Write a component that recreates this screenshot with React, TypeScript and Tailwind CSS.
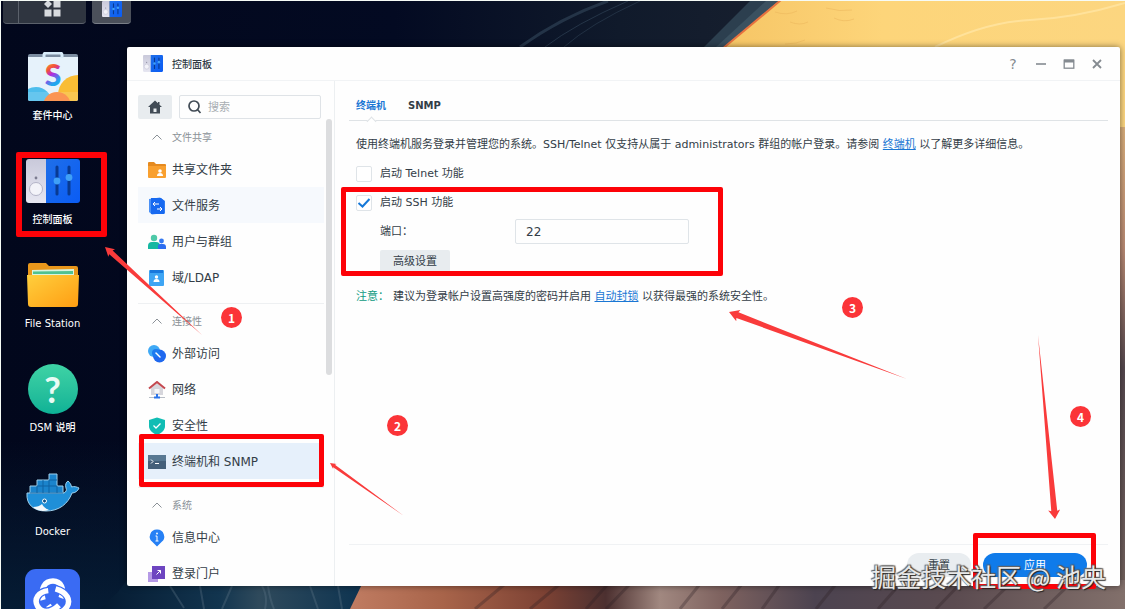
import { ReactNode, useState } from 'react';
import clsx from 'clsx';

type Point = [number, number];

interface MenuItem {
  label: string;
  icon: ReactNode;
  state?: 'hover' | 'active';
}

interface MenuSection {
  title: string;
  items: MenuItem[];
}

/* ---------- wallpaper ---------- */

function Wallpaper() {
  return (
    <svg
      className="absolute inset-0 h-full w-full"
      viewBox="0 0 1125 609"
      preserveAspectRatio="none"
      aria-hidden="true"
    >
      <defs>
        <linearGradient id="night" x1="0" y1="0" x2="1" y2="0">
          <stop offset="0" stopColor="#02071c" />
          <stop offset="0.35" stopColor="#030a22" />
          <stop offset="0.55" stopColor="#101a2b" />
          <stop offset="0.7" stopColor="#18202f" />
        </linearGradient>
        <linearGradient id="dusk" x1="0" y1="0" x2="0" y2="1">
          <stop offset="0" stopColor="#06213a" stopOpacity="0" />
          <stop offset="1" stopColor="#06213a" stopOpacity="0.8" />
        </linearGradient>
        <linearGradient id="sand" x1="0" y1="0" x2="1" y2="0">
          <stop offset="0" stopColor="#f6c565" />
          <stop offset="0.4" stopColor="#fdd57a" />
          <stop offset="1" stopColor="#fcd680" />
        </linearGradient>
        <linearGradient id="rock" x1="0" y1="0" x2="1" y2="0">
          <stop offset="0" stopColor="#c07c62" />
          <stop offset="0.12" stopColor="#a8644a" />
          <stop offset="0.25" stopColor="#7d4234" />
          <stop offset="0.33" stopColor="#4c3030" />
          <stop offset="0.4" stopColor="#a18880" />
          <stop offset="0.48" stopColor="#7e625f" />
          <stop offset="0.6" stopColor="#4c4350" />
          <stop offset="0.78" stopColor="#5b4b50" />
          <stop offset="1" stopColor="#82706b" />
        </linearGradient>
        <linearGradient id="edge" x1="0" y1="0" x2="0" y2="1">
          <stop offset="0" stopColor="#d9ae7b" />
          <stop offset="0.25" stopColor="#b98a74" />
          <stop offset="0.5" stopColor="#55484e" />
          <stop offset="1" stopColor="#75645f" />
        </linearGradient>
        <linearGradient id="sea" x1="0" y1="0" x2="1" y2="0">
          <stop offset="0" stopColor="#051a31" />
          <stop offset="0.45" stopColor="#12354f" />
          <stop offset="0.6" stopColor="#2f4a5c" />
          <stop offset="1" stopColor="#0d3350" />
        </linearGradient>
      </defs>
      <rect width="1125" height="609" fill="url(#night)" />
      <rect y="440" width="127" height="169" fill="url(#dusk)" />
      <g stroke="#33475b" fill="none">
        <path d="M520 47Q560 18 608 1" strokeWidth="3" opacity="0.6" />
        <path d="M545 47Q575 24 628 1" opacity="0.6" />
        <path d="M564 47Q590 24 640 1" opacity="0.5" />
      </g>
      <path d="M704 47L750 1H782L726 47z" fill="#2c3f4f" />
      <path d="M716 47L766 1H782L726 47z" fill="#3b5160" />
      <path d="M721 50L780 0H1125V609H1110V50z" fill="url(#sand)" />
      <path d="M721 50L781 0" stroke="#e7713f" strokeWidth="2" />
      <g stroke="#e9b45a" fill="none" opacity="0.5">
        <path d="M775 12q12 4 22 -1M790 22q10 4 18 0M826 8q14 4 26 2M834 18q10 5 20 1M785 44q12 0 20 -4" />
      </g>
      <path d="M935 47Q985 22 1030 20T1125 3" stroke="#ffe29b" strokeWidth="2" fill="none" />
      <rect x="1115" y="127" width="10" height="482" fill="url(#edge)" />
      <path d="M127 580H365L352 609H100L118 592z" fill="url(#sea)" />
      <g stroke="#5f7686" fill="none" opacity="0.35" strokeWidth="2">
        <path d="M262 586q6 10 3 23M268 586q2 14 6 23M232 586l-10 23M170 586l14 22M310 586l8 23M338 586l4 23M200 586l4 23" />
      </g>
      <path d="M350 609L364 580H1125V609z" fill="url(#rock)" />
      <g stroke="#2a1d22" opacity="0.3" strokeWidth="3">
        <path d="M505 584l-30 25M560 584l-30 25M608 584l-22 25M630 584l-24 25M700 584l-20 25M742 584l-20 25M780 584l-18 25M836 584l-20 25M900 584l-22 25M960 584l-24 25M1010 584l-26 25M1070 584l-26 25" />
      </g>
      <path d="M0 0H1125V1H0z" fill="#f6fbf6" />
      <path d="M0 0H1V609H0z" fill="#f6fbf6" />
    </svg>
  );
}

/* ---------- desktop icons ---------- */

function ControlPanelIcon({ className }: { className: string }) {
  return (
    <svg className={className} viewBox="0 0 54 44" preserveAspectRatio="none" aria-hidden="true">
      <defs>
        <linearGradient id="cpBlue" x1="0" y1="0" x2="1" y2="1">
          <stop offset="0" stopColor="#1f6fe8" />
          <stop offset="1" stopColor="#0a5cf5" />
        </linearGradient>
        <linearGradient id="cpGray" x1="0" y1="0" x2="0" y2="1">
          <stop offset="0" stopColor="#c9c9da" />
          <stop offset="1" stopColor="#e6e6f1" />
        </linearGradient>
      </defs>
      <path d="M20 0H51a3 3 0 0 1 3 3V41a3 3 0 0 1 -3 3H20z" fill="url(#cpBlue)" />
      <path d="M3 0H20V44H3a3 3 0 0 1 -3 -3V3a3 3 0 0 1 3 -3z" fill="url(#cpGray)" />
      <circle cx="10" cy="19" r="1.4" fill="#7c7c90" />
      <circle cx="10" cy="30" r="6.5" fill="#f3f3f9" stroke="#b4b4c8" />
      <path d="M31 8V35M43 8V35" stroke="#083a92" strokeWidth="3" strokeLinecap="round" />
      <circle cx="31" cy="22" r="3.4" fill="#3fa0f7" />
      <circle cx="43" cy="18.500" r="3.4" fill="#3fa0f7" />
    </svg>
  );
}

function PackageIcon() {
  return (
    <svg className="h-[50px] w-[50px]" viewBox="0 0 50 50" aria-hidden="true">
      <defs>
        <linearGradient id="pkgS" x1="0" y1="0" x2="0.3" y2="1">
          <stop offset="0.2" stopColor="#fb9e2c" />
          <stop offset="0.42" stopColor="#f2503c" />
          <stop offset="0.58" stopColor="#b22be0" />
          <stop offset="0.85" stopColor="#21a6ee" />
        </linearGradient>
        <clipPath id="pkgClip">
          <rect y="3" width="50" height="46" rx="2" />
        </clipPath>
      </defs>
      <rect y="2" width="50" height="5" rx="2" fill="#7b8ca0" />
      <g clipPath="url(#pkgClip)">
        <rect y="5" width="50" height="45" fill="#e6f2fb" />
        <circle cx="50" cy="43" r="20" fill="#f9bd35" />
        <circle cx="8" cy="51" r="16" fill="#4dbdec" />
        <circle cx="29" cy="54" r="14" fill="#fb8437" />
        <rect y="40" width="50" height="10" fill="#fff" opacity="0.14" />
      </g>
      <path d="M16 6V3a2 2 0 0 1 2 -2H32a2 2 0 0 1 2 2V6" stroke="#d8ecfa" strokeWidth="3" fill="none" />
      <text
        x="25"
        y="34"
        textAnchor="middle"
        fontFamily="Lato, sans-serif"
        fontSize="30"
        fontWeight="900"
        fill="url(#pkgS)"
      >
        S
      </text>
    </svg>
  );
}

function FolderIcon() {
  return (
    <svg className="h-[45px] w-[52px]" viewBox="0 0 52 45" aria-hidden="true">
      <defs>
        <linearGradient id="folder" x1="0" y1="0" x2="1" y2="1">
          <stop offset="0" stopColor="#ffcf3d" />
          <stop offset="1" stopColor="#ff9d12" />
        </linearGradient>
      </defs>
      <path d="M1 3a2 2 0 0 1 2 -2H19L22 4H49a2 2 0 0 1 2 2V20H1z" fill="#e9971b" />
      <path d="M5 8L47 7V16H5z" fill="#d8f4de" />
      <path d="M6 9.500L46 9V12H6z" fill="#4fc191" />
      <path d="M0 13H52L51 42a3 3 0 0 1 -3 3H4a3 3 0 0 1 -3 -3z" fill="url(#folder)" />
    </svg>
  );
}

function HelpIcon() {
  return (
    <span className="flex h-[50px] w-[50px] items-center justify-center rounded-full bg-linear-to-b from-[#3ed3a5] to-[#0cb296] font-['Lato',sans-serif] text-4xl font-bold text-[#e9fbf5]">
      ?
    </span>
  );
}

function DockerIcon() {
  return (
    <svg className="h-10 w-[54px]" viewBox="0 0 54 40" aria-hidden="true">
      <g stroke="#9fd0ec" strokeWidth="1" strokeLinejoin="round">
        <path
          d="M1 20H38C40 19 41 17 40 15C39 12 40 9 42 8C44 10 45 11 45.500 14C48 13 51 14 53 15C52 18 49 20 46 20C42 31 33 38 20 38C8 38 0 32 1 20z"
          fill="#1f8fd8"
        />
        <path d="M4 20V13H11V7H23V1H31V13H37V20z" fill="#1b84cc" />
      </g>
      <path
        d="M11 13H31M23 7H31M4 20H37M11 13V20M17 7V20M23 7V20M31 13V20"
        stroke="#0e62a3"
        strokeWidth="1"
        fill="none"
      />
      <circle cx="18.500" cy="28" r="2" fill="#0b4f86" stroke="#fff" strokeWidth="1" />
      <path d="M7 34Q13 34 16 31Q18 35 23 37Q13 40 7 34z" fill="#f4f8fa" />
    </svg>
  );
}

const KNOT_LOOP = 'M18 31C15 19 20 12 28 12C36 12 40 20 36 29';

function KnotIcon() {
  return (
    <svg className="h-[55px] w-[55px] shrink-0" viewBox="0 0 55 55" aria-hidden="true">
      <rect width="55" height="55" rx="11" fill="#3a6bf3" />
      <g fill="none" strokeLinecap="butt">
        {[0, 120, 240].map((angle) => (
          <g key={angle} transform={`rotate(${angle} 27.5 29)`}>
            <path d={KNOT_LOOP} stroke="#3a6bf3" strokeWidth="8" />
            <path d={KNOT_LOOP} stroke="#fff" strokeWidth="5.500" />
          </g>
        ))}
      </g>
    </svg>
  );
}

/* ---------- sidebar icons ---------- */

const sharedFolderIcon = (
  <svg viewBox="0 0 18 18">
    <path d="M0 2a1 1 0 0 1 1 -1H6L8 3H17a1 1 0 0 1 1 1V10H0z" fill="#e58a1f" />
    <path d="M0 5H18V16a1 1 0 0 1 -1 1H1a1 1 0 0 1 -1 -1z" fill="#f9a02f" />
    <circle cx="12" cy="10" r="1.800" fill="#fff" />
    <path d="M9 15a3 3 0 0 1 6 0z" fill="#fff" />
  </svg>
);

const fileServiceIcon = (
  <svg viewBox="0 0 18 18">
    <path d="M1 2L12 0.500L17 4V16L4 17.500L1 15z" fill="#4a90f5" />
    <path d="M3 1H13L16.500 4V17H3z" fill="#1769f0" />
    <path d="M5 7H11M5 7l2 -2M5 7l2 2M9 12H14M14 12l-2 -2M14 12l-2 2" stroke="#fff" fill="none" />
  </svg>
);

const usersIcon = (
  <svg viewBox="0 0 18 18">
    <circle cx="6" cy="5" r="3.200" fill="#4ec9a8" />
    <path d="M0 16V13a4 4 0 0 1 4 -4H8a4 4 0 0 1 4 4V16z" fill="#16b8a2" />
    <circle cx="13.500" cy="8" r="2.400" fill="#3478f0" />
    <path d="M10 16V13a2 2 0 0 1 2 -2H15a3 3 0 0 1 3 3V16z" fill="#2d6df0" />
  </svg>
);

const ldapIcon = (
  <svg viewBox="0 0 18 18">
    <rect x="1" y="1" width="15" height="16" rx="1" fill="#3ea5f4" />
    <rect x="2" y="1" width="13" height="3" fill="#1978dc" />
    <circle cx="8.500" cy="8" r="1.700" fill="#fff" />
    <path d="M5.500 13a3 3 0 0 1 6 0z" fill="#fff" />
  </svg>
);

const externalIcon = (
  <svg viewBox="0 0 18 18">
    <circle cx="6" cy="6" r="6" fill="#3fa9f5" />
    <circle cx="11.500" cy="11" r="6.500" fill="#1f68ee" />
    <circle cx="8" cy="8" r="4" fill="#1c7bf0" />
    <path d="M8 8l4 4" stroke="#fff" strokeWidth="1.500" strokeLinecap="round" />
  </svg>
);

const networkIcon = (
  <svg viewBox="0 0 18 18">
    <path d="M3 7L9 2L15 7V14H3z" fill="#d6d6dc" />
    <rect x="6.500" y="8" width="5" height="4" fill="#f6f6f8" />
    <path d="M1 7.500L9 1L17 7.500" stroke="#c4484f" strokeWidth="2" fill="none" />
    <path d="M1 16.500H17" stroke="#b7bdc6" />
    <path d="M9 13v3M6 16.500H12" stroke="#2c74e8" strokeWidth="2" />
  </svg>
);

const securityIcon = (
  <svg viewBox="0 0 18 18">
    <path d="M9 0.500L17 3V9C17 13 14 16 9 18C4 16 1 13 1 9V3z" fill="#11bdb4" />
    <path d="M5.500 8.500l2.500 2.500L12.500 6.500" stroke="#fff" strokeWidth="1.300" fill="none" />
  </svg>
);

const terminalIcon = (
  <svg viewBox="0 0 18 18">
    <rect y="2" width="18" height="14" fill="#45607a" />
    <rect y="2" width="18" height="6" fill="#587892" />
    <path d="M3 6.500l2 2l-2 2M7 10.500h4" stroke="#fff" fill="none" />
  </svg>
);

const infoIcon = (
  <svg viewBox="0 0 18 18">
    <path d="M9 0.500a7 7 0 0 1 4.500 12.500L9 17.500L4.500 13A7 7 0 0 1 9 0.500z" fill="#2680f5" />
    <path d="M9 7v5M7.500 7H9M7.500 12h3" stroke="#fff" />
    <circle cx="9" cy="4.500" r="0.900" fill="#fff" />
  </svg>
);

const portalIcon = (
  <svg viewBox="0 0 18 18">
    <rect y="7" width="10" height="10" fill="#b59ae6" />
    <rect x="4" y="1" width="13" height="13" fill="#6d45c0" />
    <path d="M8.500 9.500l4 -4M9.500 5.500h3v3" stroke="#fff" fill="none" />
  </svg>
);

const MENU_SECTIONS: MenuSection[] = [
  {
    title: '文件共享',
    items: [
      { label: '共享文件夹', icon: sharedFolderIcon },
      { label: '文件服务', icon: fileServiceIcon, state: 'hover' },
      { label: '用户与群组', icon: usersIcon },
      { label: '域/LDAP', icon: ldapIcon },
    ],
  },
  {
    title: '连接性',
    items: [
      { label: '外部访问', icon: externalIcon },
      { label: '网络', icon: networkIcon },
      { label: '安全性', icon: securityIcon },
      { label: '终端机和 SNMP', icon: terminalIcon, state: 'active' },
    ],
  },
  {
    title: '系统',
    items: [
      { label: '信息中心', icon: infoIcon },
      { label: '登录门户', icon: portalIcon },
    ],
  },
];

/* ---------- annotations ---------- */

function Highlight({ className }: { className: string }) {
  return (
    <span
      className={clsx('pointer-events-none absolute z-10 rounded-xs border-[#fd0208]', className)}
      aria-hidden="true"
    />
  );
}

function Step({ className, children }: { className: string; children: ReactNode }) {
  return (
    <span
      className={clsx(
        "absolute z-20 flex h-[21px] w-[21px] items-center justify-center rounded-full bg-[#fb3438] font-['Noto_Sans_CJK_SC',sans-serif] text-xs font-bold text-white",
        className,
      )}
    >
      {children}
    </span>
  );
}

// tapered arrow: zero width at the tail, widest just behind the head
function arrowPoints(tip: Point, tail: Point, head: number, wing: number, shaft: number) {
  const dx = tail[0] - tip[0];
  const dy = tail[1] - tip[1];
  const len = Math.hypot(dx, dy);
  const at = (along: number, side: number) =>
    `${tip[0] + (dx * along - dy * side) / len},${tip[1] + (dy * along + dx * side) / len}`;

  return [
    at(0, 0),
    at(head, wing),
    at(head - 1, shaft),
    at(len, 0),
    at(head - 1, -shaft),
    at(head, -wing),
  ].join(' ');
}

function Arrows() {
  return (
    <svg
      className="pointer-events-none absolute inset-0 z-20 h-full w-full"
      fill="#f93b3b"
      aria-hidden="true"
    >
      <polygon points={arrowPoints([105, 247], [202, 335], 9, 5, 2.5)} />
      <polygon points={arrowPoints([330, 463], [404, 516], 6, 3, 1.5)} />
      <polygon points={arrowPoints([729, 312], [907, 379], 10, 6, 3)} />
      <polygon points={arrowPoints([1055, 519], [1038, 335], 9, 6, 3)} />
    </svg>
  );
}

/* ---------- desktop ---------- */

function Taskbar() {
  return (
    <div className="relative flex h-6 gap-[6px] pl-[3px] pt-px">
      <div className="flex w-[83px] rounded-b-sm border-b border-[#5b616b] bg-[#2f3540]">
        <span className="w-4 border-r border-[#5b616b]" />
        <button className="flex flex-1 justify-center" aria-label="主菜单">
          <svg className="h-4 w-[17px]" viewBox="0 0 17 16" fill="#d7dade" aria-hidden="true">
            <path d="M0 3L3 0H5L8 3L4 7z" />
            <rect x="9.500" y="0" width="7" height="6.500" />
            <rect x="0.500" y="8.500" width="7" height="7" />
            <rect x="9.500" y="8.500" width="7" height="7" />
          </svg>
        </button>
      </div>
      <button
        className="flex w-[39px] items-start justify-center rounded-b-sm border-b border-[#7a7f88] bg-[#4b505a]"
        aria-label="打开控制面板"
      >
        <ControlPanelIcon className="h-4 w-5" />
      </button>
    </div>
  );
}

function DesktopItem({ label, icon, marked }: { label: string; icon: ReactNode; marked?: boolean }) {
  return (
    <li className="relative h-[104px] w-[105px]">
      <button className="flex w-full flex-col items-center text-[10px] font-medium leading-4 text-white">
        <span className="flex h-[55px] items-center">{icon}</span>
        <span className="mt-1">{label}</span>
      </button>
      {marked && <Highlight className="-right-[2px] -top-px bottom-[20px] left-4 border-6" />}
    </li>
  );
}

function DesktopIcons() {
  return (
    <ul className="relative pt-[25px]">
      <DesktopItem label="套件中心" icon={<PackageIcon />} />
      <DesktopItem label="控制面板" icon={<ControlPanelIcon className="h-11 w-[54px]" />} marked />
      <DesktopItem label="File Station" icon={<FolderIcon />} />
      <DesktopItem label="DSM 说明" icon={<HelpIcon />} />
      <DesktopItem label="Docker" icon={<DockerIcon />} />
      <li className="flex w-[105px] justify-center">
        <KnotIcon />
      </li>
    </ul>
  );
}

/* ---------- window ---------- */

function TitleBar() {
  return (
    <header className="flex h-[34px] shrink-0 items-center border-b border-[#f1f3f5] pl-4 pr-[17px]">
      <ControlPanelIcon className="h-[17px] w-5" />
      <h1 className="ml-[9px] flex-1 pt-[2px] text-[10px] font-medium text-[#2f3a45]">控制面板</h1>
      <div className="flex items-center gap-4 text-[#858b91]">
        <button className="w-3 text-sm leading-4" aria-label="帮助">
          ?
        </button>
        <button aria-label="最小化">
          <svg className="h-3 w-3" viewBox="0 0 12 12" stroke="currentColor" strokeWidth="1.600">
            <path d="M1 6H11" />
          </svg>
        </button>
        <button aria-label="最大化">
          <svg className="h-3 w-3" viewBox="0 0 12 12" fill="none" stroke="currentColor">
            <path d="M1 3H11" strokeWidth="3" />
            <rect x="1.200" y="2.200" width="9.600" height="8" strokeWidth="1.300" />
          </svg>
        </button>
        <button aria-label="关闭">
          <svg className="h-3 w-3" viewBox="0 0 12 12" stroke="currentColor" strokeWidth="1.800">
            <path d="M2 2L10 10M10 2L2 10" />
          </svg>
        </button>
      </div>
    </header>
  );
}

function Sidebar() {
  return (
    <aside className="flex w-[208px] shrink-0 flex-col border-r border-[#eceff1] pt-[14px]">
      <div className="flex gap-[7px] pl-[11px]">
        <button
          className="flex h-6 w-[34px] items-center justify-center rounded-xs bg-[#e8ecef] text-[#414b55]"
          aria-label="主页"
        >
          <svg className="h-[14px] w-[14px]" viewBox="0 0 14 14" fill="currentColor">
            <path
              fillRule="evenodd"
              d="M7 0.500L0 7H2V13.500H12V7H14L11.500 4.700V2H10V3.300zM5.500 8.500H8.500V12H5.500z"
            />
          </svg>
        </button>
        <label className="flex h-6 w-[142px] items-center gap-[6px] rounded-xs border border-[#dfe3e7] pl-2">
          <svg
            className="h-[14px] w-[14px] shrink-0"
            viewBox="0 0 14 14"
            fill="none"
            stroke="#414b55"
            strokeWidth="1.700"
          >
            <circle cx="6" cy="6" r="5" />
            <path d="M9.500 9.500L12.500 13" />
          </svg>
          <input
            type="search"
            className="w-full min-w-0 pt-[2px] text-[11px] outline-none placeholder:text-[#a9aeb3]"
            placeholder="搜索"
            aria-label="搜索"
          />
        </label>
      </div>

      <div className="flex min-h-0 flex-1">
        <nav className="ml-[11px] min-w-0 flex-1 overflow-hidden">
          {MENU_SECTIONS.map(({ title, items }, index) => (
            <section
              key={title}
              className={clsx('border-t pb-2 pt-[3px]', index === 0 ? 'border-transparent' : 'border-[#eef0f2]')}
            >
              <h2 className="flex h-7 items-center gap-[10px] pl-[14px] text-[10px] text-[#8b9197]">
                <svg className="h-[6px] w-[10px]" viewBox="0 0 10 6" fill="none" stroke="currentColor">
                  <path d="M0.500 5.500L5 1L9.500 5.500" />
                </svg>
                {title}
              </h2>
              <ul>
                {items.map(({ label, icon, state }) => (
                  <li key={label} className="relative">
                    <a
                      href="#"
                      className={clsx(
                        'flex h-9 items-center gap-[6px] pl-[10px] pt-[2px] text-xs text-[#333d47]',
                        state === 'hover' && 'bg-[#f6f9fd]',
                        state === 'active' && 'bg-[#e6f0fb]',
                      )}
                    >
                      <span className="h-[18px] w-[18px]" aria-hidden="true">
                        {icon}
                      </span>
                      {label}
                    </a>
                    {state === 'active' && (
                      <Highlight className="-bottom-2 -top-[9px] left-px right-0 border-5" />
                    )}
                  </li>
                ))}
              </ul>
            </section>
          ))}
        </nav>
        <div className="ml-[2px] mr-[2px] h-[256px] w-[6px] rounded-full bg-[#dcdddf]" />
      </div>
    </aside>
  );
}

interface CheckRowProps {
  label: string;
  checked: boolean;
  onChange: (checked: boolean) => void;
}

function CheckRow({ label, checked, onChange }: CheckRowProps) {
  return (
    <label className="relative flex h-[29px] w-fit items-center gap-2">
      <input
        type="checkbox"
        className="peer h-4 w-4 appearance-none rounded-xs border border-[#dfe4e8] bg-white"
        checked={checked}
        onChange={(e) => onChange(e.target.checked)}
      />
      <svg
        className="pointer-events-none absolute left-0 hidden h-4 w-4 peer-checked:block"
        viewBox="0 0 16 16"
        fill="none"
        stroke="#1678d8"
        strokeWidth="2"
        aria-hidden="true"
      >
        <path d="M2.500 8L6.500 11.500L13.500 4" />
      </svg>
      {label}
    </label>
  );
}

function TerminalPanel() {
  const [telnet, setTelnet] = useState(false);
  const [ssh, setSsh] = useState(true);

  return (
    <main className="flex min-w-0 flex-1 flex-col pl-[14px] pr-3">
      <div className="flex h-10 items-center gap-[22px] border-b border-[#dfe3e6] pl-[7px] pt-[9px] text-[10px] font-bold">
        <button className="relative text-[#1a77d4]">
          终端机
          <span className="absolute -bottom-[12px] left-3 h-[7px] w-[7px] rotate-45 border-l border-t border-[#dfe3e6] bg-white" />
        </button>
        <button className="text-[#333d47]">SNMP</button>
      </div>

      <div className="flex-1 pl-[7px] pt-2 text-[11px] leading-4 text-[#333d47]">
        <p className="h-[30px] pt-2">
          使用终端机服务登录并管理您的系统。SSH/Telnet 仅支持从属于 administrators 群组的帐户登录。请参阅{' '}
          <a href="#" className="text-[#1a77d4] underline">
            终端机
          </a>{' '}
          以了解更多详细信息。
        </p>
        <CheckRow label="启动 Telnet 功能" checked={telnet} onChange={setTelnet} />
        <div className="relative">
          <CheckRow label="启动 SSH 功能" checked={ssh} onChange={setSsh} />
          <div className="flex h-[29px] items-center pl-6">
            <label htmlFor="ssh-port" className="w-[135px]">
              端口：
            </label>
            <input
              id="ssh-port"
              className="h-[25px] w-[174px] rounded-xs border border-[#dfe4e8] px-[10px] text-xs outline-none"
              defaultValue="22"
            />
          </div>
          <button className="ml-6 mt-1 h-6 rounded-xs bg-[#e8ecef] px-[13px]">高级设置</button>
          <Highlight className="-bottom-[2px] -left-[15px] -top-px w-[382px] border-5" />
        </div>
        <p className="flex h-[46px] items-center">
          <span className="w-[37px] text-[#0f9a82]">注意：</span>
          <span>
            建议为登录帐户设置高强度的密码并启用{' '}
            <a href="#" className="text-[#1a77d4] underline">
              自动封锁
            </a>{' '}
            以获得最强的系统安全性。
          </span>
        </p>
      </div>

      <footer className="flex h-[42px] justify-end gap-3 border-t border-[#f0f2f4] pr-[21px] pt-2 text-[11px]">
        <button className="h-6 w-[64px] rounded-full bg-[#e9edf0] pt-[2px] text-[#333d47]">重置</button>
        <div className="relative">
          <button className="h-6 w-[104px] rounded-full bg-[#0f7bea] pt-[2px] text-white">应用</button>
          <Highlight className="-left-[10px] -right-[9px] -top-[20px] h-[56px] border-5" />
        </div>
      </footer>
    </main>
  );
}

export default function App() {
  return (
    <div className="relative min-h-screen overflow-hidden font-['DejaVu_Sans','Noto_Sans_CJK_SC',sans-serif]">
      <Wallpaper />
      <div className="absolute inset-0">
        <Taskbar />
        <DesktopIcons />
      </div>

      <div className="absolute bottom-[23px] left-[127px] right-[5px] top-[47px] flex flex-col rounded-xs bg-[#fefefe] shadow-[0_0_6px_rgba(0,0,0,0.5)]">
        <TitleBar />
        <div className="flex min-h-0 flex-1">
          <Sidebar />
          <TerminalPanel />
        </div>
      </div>

      <Arrows />
      <Step className="left-[221px] top-[307px]">1</Step>
      <Step className="left-[387px] top-[415px]">2</Step>
      <Step className="left-[842px] top-[297px]">3</Step>
      <Step className="left-[1070px] top-[406px]">4</Step>

      <p className="absolute bottom-[15px] right-[19px] z-30 font-['Noto_Sans_CJK_SC',sans-serif] text-[25px] leading-9 text-[#e8e8e8] [text-shadow:1px_1px_1px_#222,-1px_-1px_1px_#666,1px_-1px_1px_#555]">
        掘金技术社区 @ 池央
      </p>
    </div>
  );
}
